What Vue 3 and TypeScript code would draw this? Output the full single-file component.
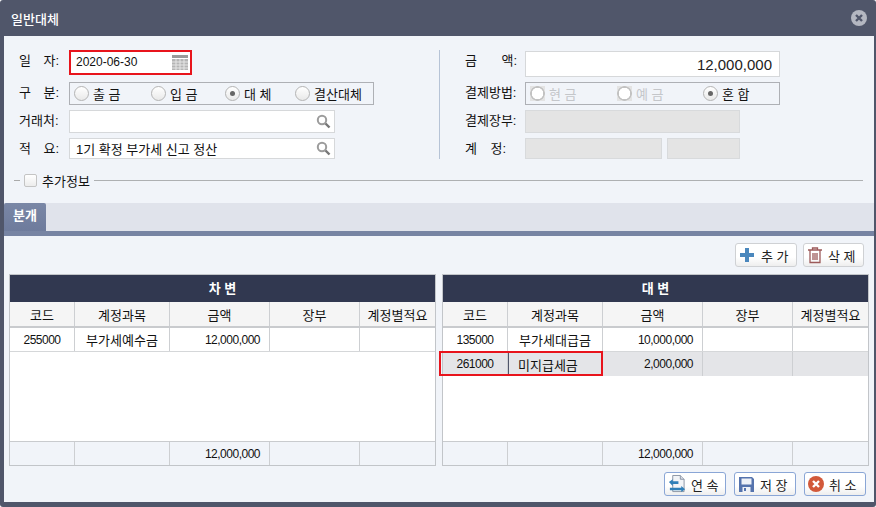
<template>
  <div class="dialog">
    <header class="title-bar">
      <span class="title">일반대체</span>
      <svg class="close" width="16" height="16" viewBox="0 0 16 16">
        <circle cx="8" cy="8" r="8" fill="#b4b7c1" />
        <path d="M5 5l6 6M11 5l-6 6" stroke="#50566a" stroke-width="2.4" />
      </svg>
    </header>

    <div class="content">
      <section class="form">
        <div class="form-col left">
          <div class="row">
            <label class="lbl">일 자:</label>
            <div class="date-box">
              <span class="date-text">2020-06-30</span>
              <svg class="cal" width="16" height="15" viewBox="0 0 16 15">
                <rect width="16" height="3" fill="#9a9a9a" />
                <rect y="4" width="16" height="11" fill="#b5b5b5" />
                <path d="M0 7h16M0 10h16M0 13h16M4 4v11M8 4v11M12 4v11" stroke="#e6e6e6" stroke-width="1" />
              </svg>
            </div>
          </div>
          <div class="row">
            <label class="lbl">구 분:</label>
            <div class="radio-group type-group">
              <span v-for="r in typeRadios" :key="r.text" class="radio-item">
                <i class="radio" :class="{ on: r.on }"></i>{{ r.text }}
              </span>
            </div>
          </div>
          <div class="row">
            <label class="lbl">거래처:</label>
            <div class="input search-input">
              <span></span>
              <svg class="mag" width="15" height="15" viewBox="0 0 15 15">
                <circle cx="6" cy="6" r="4.2" fill="none" stroke="#9c9c9c" stroke-width="2" />
                <path d="M9.5 9.5l4 4" stroke="#777" stroke-width="2.4" />
              </svg>
            </div>
          </div>
          <div class="row">
            <label class="lbl">적 요:</label>
            <div class="input search-input">
              <span>1기 확정 부가세 신고 정산</span>
              <svg class="mag" width="15" height="15" viewBox="0 0 15 15">
                <circle cx="6" cy="6" r="4.2" fill="none" stroke="#9c9c9c" stroke-width="2" />
                <path d="M9.5 9.5l4 4" stroke="#777" stroke-width="2.4" />
              </svg>
            </div>
          </div>
        </div>

        <div class="form-col right">
          <div class="row">
            <label class="lbl wide">금 액:</label>
            <div class="input amount">12,000,000</div>
          </div>
          <div class="row">
            <label class="lbl wide">결제방법:</label>
            <div class="radio-group pay-group">
              <span v-for="r in payRadios" :key="r.text" class="radio-item" :class="{ off: r.off }">
                <i class="radio" :class="{ on: r.on }"></i>{{ r.text }}
              </span>
            </div>
          </div>
          <div class="row">
            <label class="lbl wide">결제장부:</label>
            <div class="disabled book"></div>
          </div>
          <div class="row">
            <label class="lbl mid">계 정:</label>
            <div class="account">
              <div class="disabled acc1"></div>
              <div class="disabled acc2"></div>
            </div>
          </div>
        </div>
      </section>

      <div class="extra">
        <span class="tick"></span>
        <i class="check"></i>
        <span class="extra-label">추가정보</span>
        <span class="extra-line"></span>
      </div>

      <div class="tabs">
        <div class="tab">분개</div>
      </div>

      <section class="journal">
        <div class="top-actions">
          <button class="btn">
            <svg width="17" height="18" viewBox="1 0 17 18">
              <path d="M7 2h4v5h5v4h-5v5H7v-5H2V7h5z" fill="#4a87bd" />
            </svg>
            <span>추 가</span>
          </button>
          <button class="btn">
            <svg width="16" height="18" viewBox="0 0 16 18" fill="none" stroke="#9c5a5a" stroke-width="1.3">
              <path d="M1 4h14M5.500 4V2h5v2M3 4.500v12h10v-12" />
              <path d="M6 7v7M8 7v7M10 7v7" />
            </svg>
            <span>삭 제</span>
          </button>
        </div>

        <div class="tables">
          <div v-for="t in tables" :key="t.title" class="grid">
            <div class="grid-title">{{ t.title }}</div>
            <div class="grid-row head">
              <div v-for="c in columns" :key="c">{{ c }}</div>
            </div>
            <div
              v-for="row in t.rows"
              :key="row.code"
              class="grid-row body"
              :class="{ selected: row.selected }"
            >
              <div class="digits">{{ row.code }}</div>
              <div :class="{ 'focus-cell': row.selected }">{{ row.name }}</div>
              <div class="num digits">{{ row.amount }}</div>
              <div></div>
              <div></div>
            </div>
            <div class="grid-fill"></div>
            <div class="grid-row foot">
              <div></div>
              <div></div>
              <div class="num digits">12,000,000</div>
              <div></div>
              <div></div>
            </div>
            <div v-if="t.marked" class="mark"></div>
          </div>
        </div>

        <div class="bottom-actions">
          <button class="btn blue">
            <svg width="18" height="20" viewBox="0 0 19 20">
              <path d="M5 1h8l4 4v13H5z" fill="#f2f4f7" stroke="#8a93a3" />
              <path d="M13 1v4h4" fill="#d8dde5" stroke="#8a93a3" />
              <path d="M1 8l4-3v2h6v3H5v2z" fill="#2f7fb8" />
              <path d="M2 14h12v-2l4 3.500-4 3v-2H2z" fill="#2f7fb8" />
            </svg>
            <span>연 속</span>
          </button>
          <button class="btn blue">
            <svg width="17" height="17" viewBox="0 0 17 17">
              <path d="M1 1h13l2 2v13H1z" fill="#5573ad" />
              <rect x="3.500" y="2.500" width="10" height="6" fill="#eef1f7" />
              <rect x="4.500" y="11" width="8" height="5" fill="#eef1f7" />
              <rect x="6" y="12" width="2" height="3" fill="#5573ad" />
            </svg>
            <span>저 장</span>
          </button>
          <button class="btn blue">
            <svg width="16" height="16" viewBox="0 0 16 16">
              <circle cx="8" cy="8" r="8" fill="#d2593a" />
              <path d="M5 5l6 6M11 5l-6 6" stroke="#fff" stroke-width="2.400" />
            </svg>
            <span>취 소</span>
          </button>
        </div>
      </section>
    </div>
  </div>
</template>

<script setup lang="ts">
const typeRadios = [
  { text: '출 금', on: false },
  { text: '입 금', on: false },
  { text: '대 체', on: true },
  { text: '결산대체', on: false },
];

const payRadios = [
  { text: '현 금', on: false, off: true },
  { text: '예 금', on: false, off: true },
  { text: '혼 합', on: true, off: false },
];

const columns = ['코드', '계정과목', '금액', '장부', '계정별적요'];

const tables = [
  {
    title: '차 변',
    marked: false,
    rows: [{ code: '255000', name: '부가세예수금', amount: '12,000,000', selected: false }],
  },
  {
    title: '대 변',
    marked: true,
    rows: [
      { code: '135000', name: '부가세대급금', amount: '10,000,000', selected: false },
      { code: '261000', name: '미지급세금', amount: '2,000,000', selected: true },
    ],
  },
];
</script>

<style>
html,
body {
  background: #fff;
}
</style>

<style scoped>
.dialog {
  width: 876px;
  height: 507px;
  box-sizing: border-box;
  padding: 0 2px 5px 4px;
  background: #50566a;
  border-radius: 3px;
  display: flex;
  flex-direction: column;
  overflow: hidden;
  font-family: "Liberation Sans", "Noto Sans CJK KR", sans-serif;
  font-size: 13px;
  color: #111;
}

.digits {
  font-size: 12px;
  letter-spacing: -0.5px;
}

.date-text {
  font-size: 12px;
  margin-top: -2px;
}

.title-bar {
  height: 36px;
  flex: none;
  display: flex;
  align-items: center;
  justify-content: space-between;
  margin-left: -4px;
  padding: 0 7px 0 11px;
}

.title {
  color: #fff;
  font-weight: 500;
}

.content {
  flex: 1;
  background: #f1f4f9;
  min-height: 0;
}

.form {
  display: flex;
  padding: 14px 0 0 15px;
}

.form-col {
  display: grid;
  grid-template-rows: 27px 23px 23px 21px;
  row-gap: 5px;
}

.left {
  width: 420px;
  border-right: 1px solid #b6c3d6;
}

.right {
  padding-left: 25px;
}

.row {
  display: flex;
  align-items: flex-start;
}

.lbl {
  width: 40px;
  margin-right: 10px;
  line-height: 21px;
  white-space: nowrap;
  text-align-last: justify;
  flex: none;
}

.lbl.wide {
  width: 52px;
  margin-right: 8px;
}

.lbl.mid {
  width: 41px;
  margin-right: 19px;
}

.date-box {
  width: 123px;
  height: 25px;
  box-sizing: border-box;
  border: 2px solid #e8141c;
  background: #fff;
  display: flex;
  align-items: center;
  justify-content: space-between;
  padding: 0 2px 0 5px;
}

.radio-group {
  height: 23px;
  box-sizing: border-box;
  border: 1px solid #aeb0b5;
  display: grid;
  align-items: center;
  padding-left: 4px;
}

.type-group {
  width: 305px;
  grid-template-columns: 77px 74px 70px 1fr;
}

.pay-group {
  width: 255px;
  grid-template-columns: 87px 86px 1fr;
}

.radio-item {
  display: flex;
  align-items: center;
  gap: 4px;
  white-space: nowrap;
}

.radio-item.off {
  color: #c4c6ca;
}

.radio-item.off .radio {
  border: 0;
  border-radius: 0;
  background: radial-gradient(circle, #fff 0 5.5px, #c2c2c2 6px 7px, #e3e3e3 7.5px);
}

.radio {
  width: 15px;
  height: 15px;
  box-sizing: border-box;
  border-radius: 50%;
  border: 1px solid #b4b4b4;
  background: linear-gradient(#fff, #e9e9e9);
  position: relative;
  flex: none;
}

.radio.on::after {
  content: "";
  position: absolute;
  left: 4px;
  top: 4px;
  width: 5px;
  height: 5px;
  border-radius: 50%;
  background: #666;
}

.input {
  box-sizing: border-box;
  background: #fff;
  border: 1px solid #d6d8da;
  display: flex;
  align-items: center;
  padding: 0 7px;
}

.search-input {
  width: 266px;
  height: 100%;
  justify-content: space-between;
  padding: 0 3px 0 6px;
}

.amount {
  width: 255px;
  height: 26px;
  margin-top: 1px;
  justify-content: flex-end;
  font-size: 15px;
  color: #222;
}

.disabled {
  background: #e4e4e4;
  border: 1px solid #d8dadc;
  box-sizing: border-box;
  height: 100%;
}

.book {
  width: 215px;
}

.account {
  display: flex;
  gap: 5px;
  height: 100%;
}

.acc1 {
  width: 137px;
}

.acc2 {
  width: 73px;
}

.extra {
  display: flex;
  align-items: center;
  height: 16px;
  margin: 13px 0 15px 10px;
}

.tick {
  width: 6px;
  height: 1px;
  background: #aaa;
  margin-right: 4px;
}

.check {
  width: 13px;
  height: 13px;
  box-sizing: border-box;
  border: 1px solid #c4c4c4;
  border-radius: 2px;
  background: linear-gradient(#fff, #ececec);
  margin-right: 5px;
}

.extra-label {
  margin-right: 4px;
}

.extra-line {
  width: 769px;
  height: 1px;
  background: #aeb0b2;
}

.tabs {
  height: 28px;
  background: #e0e3eb;
  border-bottom: 5px solid #7784a3;
}

.tab {
  width: 42px;
  height: 28px;
  background: linear-gradient(#7a87a6, #6e7b9c);
  border-radius: 2px 2px 0 0;
  color: #fff;
  font-weight: 700;
  line-height: 26px;
  text-align: center;
}

.journal {
  padding-top: 7px;
}

.top-actions {
  display: flex;
  justify-content: flex-end;
  gap: 6px;
  padding-right: 10px;
}

.top-actions .btn:last-child {
  width: 61px;
}

.btn {
  width: 62px;
  height: 24px;
  box-sizing: border-box;
  padding: 0 0 0 3px;
  border: 1px solid #cfd1d4;
  border-radius: 3px;
  background: linear-gradient(#fff 60%, #eeeeee);
  display: flex;
  align-items: center;
  gap: 5px;
  font: inherit;
  color: #222;
}

.btn.blue {
  border-color: #8aa6d6;
}

.tables {
  display: flex;
  gap: 6px;
  padding: 7px 5px 0;
}

.grid {
  width: 427px;
  height: 192px;
  box-sizing: border-box;
  border: 1px solid #c2c5c9;
  background: #fff;
  display: flex;
  flex-direction: column;
  position: relative;
}

.grid-title {
  height: 27px;
  flex: none;
  background: #313850;
  color: #fff;
  font-weight: 700;
  line-height: 27px;
  text-align: center;
}

.grid-row {
  display: grid;
  box-sizing: border-box;
  grid-template-columns: 65px 95px 100px 90px 1fr;
  flex: none;
}

.grid-row > div {
  box-sizing: border-box;
  border-right: 1px solid #cdcfd2;
  display: flex;
  align-items: center;
  justify-content: center;
}

.grid-row > div:last-child {
  border-right: 0;
}

.grid-row > div.num {
  justify-content: flex-end;
  padding-right: 9px;
}

.head {
  height: 26px;
  background: #f5f5f5;
  border-bottom: 2px solid #c9cbce;
}

.body {
  height: 24px;
  border-bottom: 1px solid #d5d7d9;
}

.selected {
  background: #e4e5e8;
  border-bottom: 0;
}

.grid-row > div.focus-cell {
  border: 1px solid #50566a;
  justify-content: flex-start;
  padding-left: 9px;
}

.grid-fill {
  flex: 1;
}

.foot {
  height: 24px;
  background: #f1f4f9;
  border-top: 1px solid #c9cbce;
}

.mark {
  position: absolute;
  left: -4px;
  top: 76px;
  width: 164px;
  height: 25px;
  box-sizing: border-box;
  border: 2px solid #e8141c;
}

.bottom-actions {
  display: flex;
  justify-content: flex-end;
  gap: 8px;
  padding: 6px 8px 0 0;
}
</style>
